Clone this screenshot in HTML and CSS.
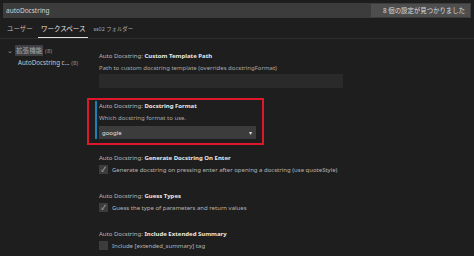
FILE: index.html
```html
<!doctype html>
<html>
<head>
<meta charset="utf-8">
<title>設定</title>
<link rel="stylesheet" href="styles.css">
</head>
<body>
<div class="search">
	<span class="search_txt">autoDocstring</span>
	<span class="badge">8 個の設定が見つかりました</span>
</div>
<div class="tabs">
	<span class="tab">ユーザー</span>
	<span class="tab on">ワークスペース</span>
	<span class="tab small">ss02 フォルダー</span>
</div>
<div class="main">
	<div class="side">
		<div class="tree_row"><span class="chev">⌄</span><span class="hl">拡張機能</span> <span class="cnt">(8)</span></div>
		<div class="tree_row sub">AutoDocstring c... <span class="cnt">(8)</span></div>
	</div>
	<div class="content">
		<div class="setting">
			<div class="ttl">Auto Docstring: <b>Custom Template Path</b></div>
			<div class="desc">Path to custom docstring template (overrides docstringFormat)</div>
			<div class="input"></div>
		</div>
		<div class="mark">
			<div class="focus">
				<div class="ttl">Auto Docstring: <b>Docstring Format</b></div>
				<div class="desc">Which docstring format to use.</div>
				<div class="select"><span>google</span><span class="arr">▾</span></div>
			</div>
		</div>
		<div class="setting chk_set">
			<div class="ttl">Auto Docstring: <b>Generate Docstring On Enter</b></div>
			<div class="chk_row"><span class="box">✓</span>Generate docstring on pressing enter after opening a docstring (use quoteStyle)</div>
		</div>
		<div class="setting chk_set">
			<div class="ttl">Auto Docstring: <b>Guess Types</b></div>
			<div class="chk_row"><span class="box">✓</span>Guess the type of parameters and return values</div>
		</div>
		<div class="setting chk_set">
			<div class="ttl">Auto Docstring: <b>Include Extended Summary</b></div>
			<div class="chk_row"><span class="box"></span>Include [extended_summary] tag</div>
		</div>
	</div>
</div>
</body>
</html>
```

FILE: styles.css
```css
*{margin:0;padding:0;box-sizing:border-box;}
body{background:#1e1e1e;color:#cccccc;font-family:"Noto Sans","Noto Sans CJK JP",sans-serif;font-size:6.5px;width:474px;height:256px;overflow:hidden;}
.search{margin:3px 3px 0;height:15px;background:#3c3c3c;display:flex;align-items:center;justify-content:space-between;padding-left:3px;}
.search_txt{color:#d4d4d4;}
.badge{background:#4e4e4e;height:13px;line-height:13px;padding:0 5px 0 12px;margin-right:1px;color:#dddddd;font-size:6.4px;}
.tabs{height:21px;display:flex;align-items:flex-end;gap:8px;padding-left:7px;border-bottom:1px solid #2e2e2e;}
.tab{line-height:11px;height:20px;padding-top:5px;color:#b8b8b8;}
.tab.on{color:#e7e7e7;border-bottom:1px solid #e0e0e0;padding:5px 3px 0;margin-left:-3px;}
.tab.small{font-size:5.4px;padding-top:6px;margin-left:-3px;color:#aaa;}
.main{display:flex;}
.side{width:99px;padding-top:6px;}
.tree_row{line-height:12px;padding-left:7px;color:#bbbbbb;white-space:nowrap;font-size:6.6px;}
.tree_row.sub{padding-left:18px;color:#c8c8c8;font-size:6.2px;}
.chev{display:inline-block;width:8px;color:#999;}
.hl{background:#3d3f43;padding:1px 1px;color:#a8a8a8;}
.cnt{color:#8a8a8a;font-size:6px;}
.content{flex:1;padding-top:12px;font-size:6px;}
.ttl{line-height:11px;color:#b9b9b9;white-space:nowrap;}
.ttl b{color:#e8e8e8;font-weight:bold;}
.desc{line-height:12px;color:#a9a9a9;white-space:nowrap;}
.input{width:244px;height:14px;background:#2a2a2a;margin-top:0px;}
.mark{margin:10px 0 0 -12px;width:177px;border:2px solid #e0162b;padding:1px 6px 4px 6px;}
.focus{border-left:2px solid #1c7fb8;padding-left:2px;}
.focus .ttl{line-height:11px;}
.select{width:157px;height:13px;background:#3c3c3c;margin-top:2px;display:flex;align-items:center;justify-content:space-between;padding:0 4px 0 3px;color:#e0e0e0;}
.arr{font-size:6px;color:#ddd;}
.chk_set{padding-bottom:16px;}
.mark + .chk_set{margin-top:8px;}
.chk_row{display:flex;align-items:center;height:11px;color:#b4b4b4;white-space:nowrap;}
.box{width:9px;height:9px;background:#3c3c3c;margin-right:4px;color:#c0c0c0;font-size:7px;line-height:9px;text-align:center;}
```
